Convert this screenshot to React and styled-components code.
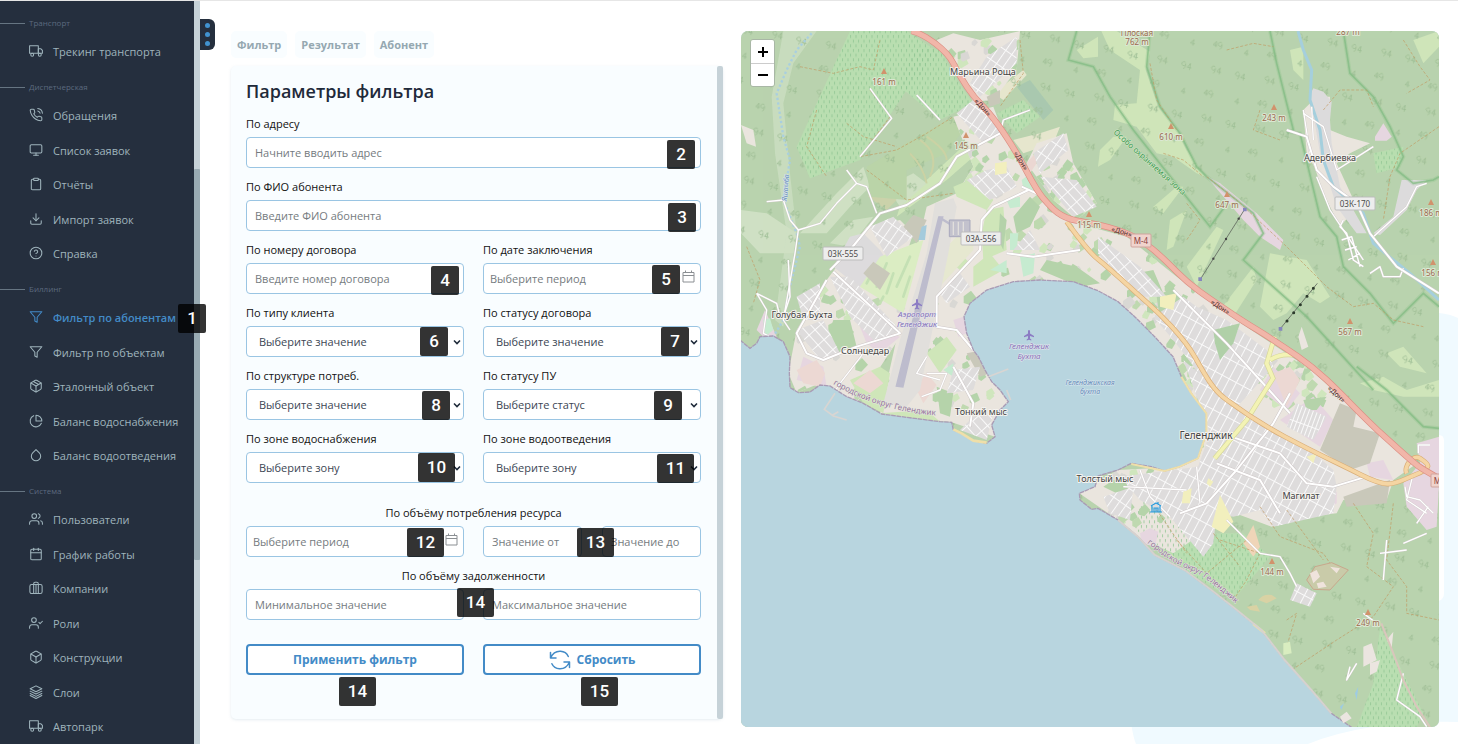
import React, { useId } from 'react';
import styled, { createGlobalStyle, css } from 'styled-components';
import {
  FiTruck, FiPhoneCall, FiMonitor, FiClipboard, FiDownload, FiHelpCircle, FiFilter,
  FiPackage, FiPieChart, FiDroplet, FiUsers, FiCalendar, FiUserCheck, FiBox,
} from 'react-icons/fi';

const c = {
  navy: '#252f3e',
  navText: '#9fb4bc',
  navMuted: '#5c6a7e',
  blue: '#438bc7',
  border: '#9ac5e3',
  panel: '#f9fdff',
  track: '#c6d2d8',
  thumb: '#99abb3',
  ink: '#1f2a3a',
};

const GlobalStyle = createGlobalStyle`
  *, *::before, *::after { box-sizing: border-box; }
  body { margin: 0; background: #fff; }
  body, button, input, select { font-family: "Open Sans", "Noto Sans", sans-serif; }
`;

const Page = styled.div`
  position: relative;
  display: flex;
  min-height: 100vh;
  overflow: hidden;
  border-top: 1px solid #e6e6e6;
`;

const Backdrop = styled.svg`
  position: absolute;
  right: 0;
  bottom: 0;
  width: 340px;
  height: 434px;
`;

/* Sidebar */
const Sidebar = styled.aside`
  position: relative;
  flex: 0 0 200px;
  display: flex;
  height: calc(100vh - 1px);
  background: ${c.navy};
`;

const Nav = styled.nav`
  flex: 1;
  min-width: 0;
  padding-top: 11px;
  overflow: hidden;
`;

const NavGroup = styled.section`
  margin-bottom: 8px;
`;

const NavHeading = styled.h2`
  display: flex;
  align-items: center;
  gap: 4px;
  margin: 0;
  height: 22px;
  font-size: 8px;
  line-height: 12px;
  font-weight: 400;
  color: ${c.navMuted};
  &::before {
    content: '';
    width: 25px;
    height: 1px;
    background: #667582;
  }
`;

const NavList = styled.ul`
  margin: 0;
  padding: 0;
  list-style: none;
  li:nth-child(even) { margin-top: 1px; }
`;

const NavLink = styled.a`
  display: flex;
  align-items: center;
  gap: 10px;
  height: 34px;
  padding-left: 29px;
  font-size: 11px;
  font-weight: ${(p) => (p.$active ? 600 : 500)};
  color: ${(p) => (p.$active ? c.blue : c.navText)};
  text-decoration: none;
  white-space: nowrap;
  svg { flex: none; width: 14px; height: 14px; stroke-width: 1.8; }
`;

const Scrollbar = styled.div`
  flex: 0 0 6px;
  align-self: stretch;
  padding-top: ${(p) => p.$offset || 0}px;
  border-radius: ${(p) => p.$radius || 0}px;
  background: ${c.track};
`;

const ScrollThumb = styled.div`
  height: 391px;
  border-radius: 1px;
  background: ${c.thumb};
`;

const MenuToggle = styled.button`
  position: absolute;
  left: 100%;
  top: 18px;
  display: flex;
  flex-direction: column;
  align-items: center;
  justify-content: center;
  gap: 4px;
  width: 15px;
  height: 31px;
  padding: 0;
  border: 0;
  border-radius: 0 6px 6px 0;
  background: ${c.navy};
`;

const Dot = styled.span`
  width: 5px;
  height: 5px;
  border-radius: 50%;
  background: #4193d0;
`;

const Callout = styled.span`
  position: absolute;
  z-index: 2;
  display: grid;
  place-items: center;
  width: ${(p) => (p.$wide ? 37 : 28)}px;
  height: 29px;
  border-radius: 2px;
  background: rgba(0, 0, 0, 0.8);
  color: #fff;
  font: 500 17px/1 Roboto, sans-serif;
  pointer-events: none;
  top: ${(p) => p.$top}px;
  ${(p) => (p.$left !== undefined ? css`left: ${p.$left}px;` : css`right: ${p.$right}px;`)}
`;

/* Content */
const Main = styled.main`
  position: relative;
  flex: 1;
  min-width: 0;
  display: grid;
  grid-template-columns: 492fr 698fr;
  gap: 18px;
  padding: 30px 19px 17px 31px;
`;

const FilterColumn = styled.div`
  display: flex;
  flex-direction: column;
  gap: 8px;
  padding-bottom: 8px;
`;

const Tabs = styled.div`
  display: flex;
  gap: 8px;
`;

const Tab = styled.button`
  height: 27px;
  padding: 0 6px;
  border: 0;
  border-radius: 5px;
  background: ${c.panel};
  color: #95a8b1;
  font-size: 11px;
  font-weight: 700;
`;

const Panel = styled.div`
  flex: 1;
  display: flex;
  border-radius: 5px;
  background: ${c.panel};
  box-shadow: 0 1px 3px rgba(150, 180, 200, 0.25);
`;

const FilterForm = styled.form`
  flex: 1;
  min-width: 0;
  padding: 13px 16px 44px 15px;
`;

const Title = styled.h1`
  margin: 0 0 13px;
  font-size: 18px;
  line-height: 24px;
  font-weight: 600;
  color: ${c.ink};
`;

const Fields = styled.div`
  display: grid;
  grid-template-columns: 1fr 1fr;
  gap: 11px 19px;
`;

const FieldBox = styled.div`
  display: flex;
  flex-direction: column;
  gap: 5px;
  ${(p) => p.$wide && css`grid-column: 1 / -1;`}
`;

const labelText = css`
  font-size: 11px;
  line-height: 16px;
  font-weight: 500;
  color: #111;
`;

const Label = styled.label`
  ${labelText}
`;

const Control = styled.div`
  position: relative;
`;

const fieldLook = css`
  display: block;
  width: 100%;
  height: 31px;
  border: 1px solid ${c.border};
  border-radius: 4px;
  background: #fff;
  font-size: 11px;
  color: #3c4654;
`;

const Input = styled.input`
  ${fieldLook}
  padding: 0 ${(p) => (p.$date ? 6 : 8)}px;
  &::placeholder { color: #757b80; opacity: 1; }
`;

const Select = styled.select`
  ${fieldLook}
  appearance: none;
  padding: 0 12px;
`;

const FieldIcon = styled.svg`
  position: absolute;
  right: ${(p) => p.$right}px;
  top: ${(p) => p.$top}px;
  width: ${(p) => p.$size}px;
  height: ${(p) => p.$size}px;
  fill: none;
  pointer-events: none;
`;

const RangeGroup = styled.fieldset`
  margin: ${(p) => p.$top}px 0 0;
  padding: 0;
  border: 0;
  min-width: 0;
`;

const RangeLegend = styled.legend`
  ${labelText}
  width: 100%;
  padding: 0 0 5px;
  text-align: center;
`;

const Pair = styled.div`
  display: grid;
  grid-template-columns: 1fr 1fr;
  gap: ${(p) => p.$gap}px;
`;

const Actions = styled(Pair)`
  margin-top: 24px;
`;

const ActionButton = styled.button`
  display: flex;
  align-items: center;
  justify-content: center;
  gap: 6px;
  width: 100%;
  height: 31px;
  padding: 0;
  border: 2px solid ${c.blue};
  border-radius: 4px;
  background: #fff;
  color: ${c.blue};
  font-size: 12px;
  font-weight: 700;
  svg { width: 22px; height: 22px; }
`;

/* Map */
const MapCard = styled.section`
  position: relative;
  min-height: 696px;
  border-radius: 7px;
  overflow: hidden;
  background: #b8d5df;
`;

const MapCanvas = styled.svg`
  position: absolute;
  inset: 0;
  width: 100%;
  height: 100%;
  text { font-family: "Noto Sans", sans-serif; paint-order: stroke; stroke-linejoin: round; }
`;

const Zoom = styled.div`
  position: absolute;
  left: 9px;
  top: 8px;
  display: flex;
  flex-direction: column;
  width: 25px;
  border: 1px solid #a9b7a6;
  border-radius: 3px;
  overflow: hidden;
`;

const ZoomButton = styled.button`
  height: 23px;
  padding: 0;
  border: 0;
  background: #fff;
  color: #000;
  & + & { border-top: 1px solid #ccc; }
  svg { display: block; margin: auto; }
`;

const BriefcaseIcon = () => (
  <svg viewBox="0 0 24 24" fill="none" stroke="currentColor" strokeLinecap="round" strokeLinejoin="round">
    <rect x="1.5" y="6" width="21" height="15.5" rx="3" />
    <path d="M8 21.5V5c0-2 1-3 2.500-3h3C15 2 16 3 16 5v16.500M12 6v15.500" />
  </svg>
);

const LayersIcon = () => (
  <svg viewBox="0 0 24 24" fill="none" stroke="currentColor" strokeLinecap="round" strokeLinejoin="round">
    <path d="M12 1.500 2 6.500l10 5 10-5zM2 10.500l10 5 10-5M2 14.500l10 5 10-5M2 18l10 5 10-5" />
  </svg>
);

const RefreshIcon = () => (
  <svg viewBox="0 0 22 22" fill="none" stroke="currentColor" strokeWidth="1.5" strokeLinecap="round" strokeLinejoin="round">
    <path d="M1.500 3.500v5.500H7M1.500 9C4 3.500 8 2 11.500 2.200c3.500.2 6.500 2.300 7.800 5.300" />
    <path d="M20.500 18.500V13H15M20.500 13C18 18.500 14 20 10.500 19.800c-3.500-.2-6.300-2.300-7.600-5.100" />
  </svg>
);

const Chevron = () => (
  <FieldIcon viewBox="0 0 10 10" $size={10} $right={2} $top={11}>
    <path d="M2 3.500 5 6.500 8 3.500" stroke="#1f2a3a" strokeWidth="1.6" />
  </FieldIcon>
);

const CalendarMark = () => (
  <FieldIcon viewBox="0 0 13 13" $size={13} $right={6} $top={7}>
    <path d="M1 2.500h11v9.500H1zM1 5.500h11M3.500.5v2M9.500.5v2" stroke="#8b8f93" />
  </FieldIcon>
);

function Field({ label, wide, kind = 'text', text, mark }) {
  const id = useId();
  return (
    <FieldBox $wide={wide}>
      <Label htmlFor={id}>{label}</Label>
      <Control>
        {kind === 'select' ? (
          <>
            <Select id={id} defaultValue={text}><option>{text}</option></Select>
            <Chevron />
          </>
        ) : (
          <Input id={id} placeholder={text} $date={kind === 'date'} />
        )}
        {kind === 'date' && <CalendarMark />}
        <Callout $right={mark[1]} $top={mark[2]} $wide={mark[0] > 9}>{mark[0]}</Callout>
      </Control>
    </FieldBox>
  );
}

const groups = [
  { title: 'Транспорт', items: [['Трекинг транспорта', FiTruck]] },
  {
    title: 'Диспетчерская',
    items: [
      ['Обращения', FiPhoneCall], ['Список заявок', FiMonitor], ['Отчёты', FiClipboard],
      ['Импорт заявок', FiDownload], ['Справка', FiHelpCircle],
    ],
  },
  {
    title: 'Биллинг',
    items: [
      ['Фильтр по абонентам', FiFilter, true], ['Фильтр по объектам', FiFilter],
      ['Эталонный объект', FiPackage], ['Баланс водоснабжения', FiPieChart],
      ['Баланс водоотведения', FiDroplet],
    ],
  },
  {
    title: 'Система',
    items: [
      ['Пользователи', FiUsers], ['График работы', FiCalendar], ['Компании', BriefcaseIcon],
      ['Роли', FiUserCheck], ['Конструкции', FiBox], ['Слои', LayersIcon], ['Автопарк', FiTruck],
    ],
  },
];

const fields = [
  { label: 'По адресу', wide: true, text: 'Начните вводить адрес', mark: [2, 6, 3] },
  { label: 'По ФИО абонента', wide: true, text: 'Введите ФИО абонента', mark: [3, 5, 3] },
  { label: 'По номеру договора', text: 'Введите номер договора', mark: [4, 5, 3] },
  { label: 'По дате заключения', kind: 'date', text: 'Выберите период', mark: [5, 21, 2] },
  { label: 'По типу клиента', kind: 'select', text: 'Выберите значение', mark: [6, 16, 1] },
  { label: 'По статусу договора', kind: 'select', text: 'Выберите значение', mark: [7, 12, 1] },
  { label: 'По структуре потреб.', kind: 'select', text: 'Выберите значение', mark: [8, 14, 2] },
  { label: 'По статусу ПУ', kind: 'select', text: 'Выберите статус', mark: [9, 19, 2] },
  { label: 'По зоне водоснабжения', kind: 'select', text: 'Выберите зону', mark: [10, 9, 1] },
  { label: 'По зоне водоотведения', kind: 'select', text: 'Выберите зону', mark: [11, 7, 2] },
];

/* Map geometry is kept in a grid of three units per pixel. */
const sea = 'M0 960L30 985 50 970 60 950 100 948 130 965 150 1010 148 1060 150 1103 175 1118 210 1116 240 1095 270 1098 320 1130 370 1150 425 1182 500 1192 600 1205 635 1207 640 1230 665 1240 700 1262 740 1270 765 1250 755 1215 780 1170 805 1145 780 1110 755 1085 735 1050 715 1010 700 990 680 940 672 890 690 850 740 810 820 785 900 780 1000 785 1074 812 1134 845 1184 890 1244 950 1299 1010 1324 1070 1354 1120 1399 1180 1399 1240 1374 1315 1319 1340 1274 1353 1234 1340 1174 1330 1134 1350 1074 1368 1065 1400 1018 1420 1020 1440 1055 1468 1074 1465 1134 1500 1194 1550 1244 1605 1334 1650 1414 1710 1484 1765 1564 1830 1634 1920 1714 2010 1774 2080 1839 2125 0 2130Z';

const highway = 'M515 33C560 45 620 90 640 130S690 220 725 255 800 350 830 400 880 500 910 535 960 592 1010 602 1100 615 1160 640 1260 705 1310 755 1400 830 1474 880 1574 940 1674 1010 1834 1160 1934 1250 2024 1335 2097 1375';
const coastRoad = 'M980 605C1020 660 1050 700 1074 718S1190 820 1224 850 1330 950 1364 1010 1420 1110 1454 1135 1540 1200 1634 1250 1774 1320 1864 1365 1960 1390 2024 1365 2060 1330 2040 1315 1990 1340 2000 1360';

const urban = [
  'M650 520L560 560 500 820 420 1180 500 1192 635 1207 765 1250 805 1145 735 1050 672 890 740 810 1074 812 1324 1070 1399 1240 1319 1340 1134 1350 1018 1420 1134 1500 1194 1550 1300 1600 1400 1530 1385 1490 1500 1485 1595 1520 1700 1490 1790 1480 1810 1440 1940 1440 1960 1380 2024 1335 1834 1160 1714 1050 1474 890 1310 770 1160 650 1010 610 900 530 850 440 790 340 760 260 640 290 700 440Z',
  'M590 60L640 40 720 60 840 33 830 150 760 240 700 245 650 150Z',
  'M890 370L980 340 1000 430 1070 550 1010 600 940 540 860 430Z',
  'M170 930L260 780 380 620 480 600 520 640 500 700 480 950 330 1180 240 1090 170 1118 145 1060Z',
  'M3 315L40 330 48 380 20 370Z',
  'M1690 270L1730 230 1770 230 1770 330 1820 350 1890 370 1830 400 1790 430 1850 560 1800 620 1750 520 1710 400Z',
  'M1690 270L1720 270 1740 470 1700 400Z',
];

const built = [
  ['M650 280L700 240 790 340 730 370Z', 'a'],
  ['M740 110L830 50 830 130 720 230 690 190Z', 'a'],
  ['M880 400L970 340 985 390 900 460Z', 'a'],
  ['M900 470L1010 480 1070 560 1000 590Z', 'b'],
  ['M680 480L740 450 800 440 830 500 750 540Z', 'b'],
  ['M270 770L330 770 480 930 410 970 330 890Z', 'a'],
  ['M390 620L460 590 520 650 440 710Z', 'a'],
  ['M170 930L250 900 300 1000 240 1020Z', 'b'],
  ['M170 830L240 790 240 900 190 900Z', 'b'],
  ['M600 820L660 760 690 800 620 850Z', 'a'],
  ['M820 690L870 630 900 690Z', 'b'],
  ['M1074 650L1200 740 1280 830 1200 830 1074 700Z', 'b'],
  ['M1240 890L1330 830 1370 860 1460 900 1580 990 1600 1040 1474 1180 1400 1090 1300 960Z', 'c'],
  ['M1330 1020L1480 1150 1560 1210 1700 1280 1780 1350 1790 1400 1780 1480 1600 1520 1560 1470 1480 1490 1430 1480 1420 1570 1390 1610 1290 1490 1200 1440 1140 1370 1374 1340 1410 1240Z', 'c'],
  ['M1670 1150L1760 1190 1720 1260 1640 1220Z', 'd'],
  ['M1670 1690L1730 1720 1710 1760 1650 1740Z', 'c'],
  ['M1090 1430L1180 1400 1170 1500 1110 1480Z', 'a'],
  ['M640 1050L720 1040 700 1110 620 1120Z', 'a'],
  ['M700 1190L760 1180 740 1260 660 1230Z', 'b'],
];

const grass = [
  'M470 590L620 480 700 410 740 380 700 350 560 480 480 560Z',
  'M1084 33L1130 33 1230 95 1218 150 1255 260 1310 330 1340 390 1395 470 1370 460 1300 410 1250 400 1190 320 1120 300 1125 255 1190 250 1200 150 1110 90Z',
  'M1080 390L1120 350 1160 350 1110 420 1074 440Z',
  'M1240 560L1310 500 1330 500 1270 580Z',
  'M1290 600L1340 570 1300 680 1280 690Z',
  'M1340 740L1430 620 1450 630 1370 800Z',
  'M1440 870L1540 740 1550 780 1480 890Z',
  'M1590 700L1700 720 1770 830 1740 850 1690 820 1640 880 1600 900 1560 860Z',
  'M1860 1090L1930 1070 2000 1110 2097 1080 2097 1130 1990 1130 1900 1110Z',
  'M1940 1000L1990 980 2060 1060 1980 1040Z',
  'M2020 60L2097 33 2097 80 2050 130Z',
  'M1650 90L1690 80 1690 180 1660 150Z',
  'M360 800L420 710 550 660 490 880Z',
  'M1010 90L1074 50 1074 110 1030 115Z',
];

const urbanGrass = [
  'M640 500L700 475 760 540 740 570 650 530Z',
  'M740 570L790 560 800 690 730 720 725 640Z',
  'M610 710L640 680 690 730 660 750Z',
  'M700 740L750 700 790 750 700 800Z',
  'M330 1080L420 1040 450 1060 430 1180 370 1150Z',
  'M420 1180L560 1170 600 1205 500 1192Z',
  'M560 1000L620 950 650 990 600 1060Z',
];

const treesDark = [
  'M500 450L620 400 690 300 640 290 480 380 380 440 390 530 500 540Z',
  'M860 540L960 520 940 620 870 620Z',
];

const orchards = [
  'M330 33L500 33 600 100 500 210 360 420 210 475 170 380Z',
  'M520 80L600 90 650 180 700 250 600 300 480 200Z',
  'M1230 1400L1310 1490 1390 1600 1430 1540 1510 1540 1590 1610 1480 1740 1350 1660 1200 1540 1170 1510Z',
  'M770 280L850 240 900 290 830 340Z',
  'M1900 400L1990 380 1980 440 1910 460Z',
  'M1920 1820L1990 1960 2050 2080 2030 2122 1850 2122 1900 1990Z',
];

const pinks = [
  'M360 920L420 930 480 950 420 1000 380 970Z',
  'M50 930L75 870 110 950 70 950Z',
  'M170 1080L260 1100 250 1040 190 1010Z',
  'M1600 1040L1680 1120 1640 1170 1560 1110Z',
  'M1620 1200L1720 1130 1780 1200 1740 1280Z',
  'M1880 1330L1930 1320 1960 1380 1890 1370Z',
  'M2030 1270L2097 1250 2097 1400 2090 1520 2060 1530 2000 1460 1990 1390 2040 1330Z',
  'M1200 1540L1230 1525 1255 1535 1245 1580 1205 1570Z',
  'M1395 465L1440 490 1550 580 1630 660 1620 690 1560 650 1510 600Z',
  'M1905 350L1930 310 1955 350 1940 362 1905 362Z',
  'M1770 1430L1790 1415 1790 1450 1775 1460Z',
  'M640 900L670 890 680 940 655 950Z',
];

const browns = [
  'M490 620L520 585 560 600 530 670Z',
  'M370 760L400 725 450 760 420 810Z',
  'M1800 1150L1850 1170 1840 1220 1920 1240 1890 1330 1830 1350 1740 1290Z',
  'M1810 1430L1950 1380 1940 1450 1820 1460Z',
  'M680 1000L730 990 750 1060 720 1070Z',
  'M740 230L780 210 780 250 750 260Z',
  'M1520 1340L1550 1325 1540 1370 1515 1360Z',
];

const borders = [
  'M1010 33L985 120 1060 140 1110 230 1180 330 1410 620 1454 560',
  'M1230 33L1220 140 1260 260 1320 340 1370 440 1400 470 1540 580 1570 640 1510 720 1700 890 1900 1110',
  'M1590 33L1610 130 1660 330 1640 335 1680 340 1740 590 1790 650 1810 740 1890 820 1960 910 2050 820 2097 860',
  'M1810 33L1830 160 1900 230 1950 320 1990 410 1970 450 2020 490 2080 480 2097 470',
  'M1850 1040L1940 1110 2050 1220 2097 1225',
];

const tracks = [
  'M180 140L280 160 360 140 400 150 420 60', 'M390 210L450 290 360 410 470 390 560 340 640 290',
  'M320 310L370 350 470 380', 'M380 450L500 540 640 520', 'M1400 470L1490 540 1640 680 1760 800 1840 860 1900 850 1960 900 2050 920',
  'M1560 270L1540 330 1620 360', 'M1750 270L1800 210 1880 210 1900 260', 'M2097 320L1980 400 1950 470 1930 600',
  'M1560 1460L1620 1550 1750 1600 1770 1630', 'M1640 1470L1750 1620', 'M1440 1560L1560 1600 1520 1680 1480 1740',
  'M1840 1450L1900 1540 1880 1640 1960 1700 1900 1790 1790 1860 1640 1960', 'M1960 1450L1940 1620 2000 1700 2000 1780 2097 1800',
  'M1640 1800L1670 1780 1640 1880', 'M230 270L200 380 260 470', 'M1230 130L1250 240 1310 330', 'M1990 60L2040 140 2070 180 2000 220',
  'M1340 550L1380 600 1340 660', 'M20 680L60 780 40 850', 'M1270 400L1330 420 1390 470', 'M1460 90L1540 70 1600 80',
  'M1310 1560L1400 1660 1520 1560', 'M1420 1540L1500 1640', 'M840 60L850 160 780 260', 'M1250 1470L1340 1600',
];

const mainRoads = [
  'M270 750L330 690 420 580 500 555 600 490 650 410 780 340',
  'M865 510L760 560 725 600 720 690 590 830 590 920 650 930 700 990',
  'M1640 330L1700 350 1730 450 1780 500 1850 550 1890 640 1970 740 2097 820',
  'M1474 1250L1620 1300 1700 1390 1780 1400 1880 1370', 'M1430 1330L1560 1380 1620 1480', 'M1320 1480L1400 1450 1490 1350 1600 1210 1650 1120',
  'M1300 810L1460 970 1560 1080 1650 1180', 'M640 1040L700 1150 690 1220',
  'M260 780L170 940 200 1000 250 1020 350 980 480 940 280 755', 'M845 500L900 525M800 700L880 710 1020 690',
];

const minorRoads = [
  'M80 545L130 540 150 600 175 630 240 610 290 550 350 490 320 450M350 490L380 500 410 580',
  'M175 630L165 700 130 900 150 930', 'M390 205L455 295 360 410', 'M530 225L600 300', 'M870 270L790 300 780 340',
  'M145 720L150 830 130 890', 'M1690 280L1750 320 1790 450 1900 380', 'M1690 270L1710 400M1715 260L1720 360',
  'M1900 650L2000 560 2030 500 2060 490', 'M1730 470L1770 570 1870 720',
  'M1810 600L1800 620 1820 640 1840 720 1870 740M1805 660L1835 650 1860 740M1815 690L1850 680M1825 720L1860 700',
  'M1890 760L1920 740 1930 770 1980 770 1990 745', 'M1370 1340L1380 1450', 'M1460 1500L1560 1600 1620 1610 1650 1660 1670 1700',
  'M1200 1350L1230 1430 1290 1490M1150 1400L1340 1410', 'M545 1130L600 1110 620 1060 560 1060M250 1170L300 1090 370 1000',
  'M2020 1360L2000 1440 2060 1480M1930 1680L1940 1560', 'M2035 1300V1275H2070M1995 1400L2000 1430 2040 1440 2080 1480M2065 1460L2030 1510',
  'M1990 1960L1970 2040 2040 2090 2060 2120', 'M1870 1780L1910 1810', 'M50 820L80 870 70 940 90 950M50 820L110 850 120 890',
  'M560 1010L530 1060 600 1080', 'M1830 1940L1820 1980 1850 1930', 'M1990 1570L2060 1540M1920 1600L2000 1590',
];

/* Gardens and yards scattered through the built-up area, from a fixed seed. */
const gardens = (() => {
  let seed = 11;
  const next = () => {
    seed = (seed * 16807) % 2147483647;
    return seed / 2147483647;
  };
  const spots = [
    [560, 820, 180, 380], [780, 560, 280, 240], [1060, 640, 240, 260], [1200, 760, 220, 300],
    [1290, 900, 120, 380], [1540, 1010, 200, 160], [1080, 1350, 260, 160], [170, 780, 300, 380],
    [860, 380, 200, 200], [640, 300, 200, 220], [600, 60, 230, 170],
  ];
  const shapes = [];
  spots.forEach(([x0, y0, w, h]) => {
    for (let i = 0; i < 34; i += 1) {
      const x = Math.round(x0 + next() * w);
      const y = Math.round(y0 + next() * h);
      const s = Math.round(7 + next() * 16);
      const t = Math.round(5 + next() * 14);
      shapes.push(`M${x} ${y}l${s} ${-t}l${t} ${s}l${-s} ${t + 3}l${-t} ${-5}Z`);
    }
  });
  return shapes;
})();
const gardenTints = ['#b5d4aa', '#bfd9b0', '#cfe6bd', '#b5d4aa', '#d9d8d4'];

const peaks = [
  [884, 72, '161 m'], [966, 136, '145 m'], [1089, 215, '115 m'], [1171, 127, '610 m'], [1274, 108, '243 m'],
  [1227, 195, '647 m'], [1350, 322, '567 m'], [1431, 203, '186 m'], [1433, 263, '156 m'], [1272, 562, '144 m'], [1368, 613, '249 m'],
];

const towns = [
  [983, 75, 'Марьина Роща'], [802, 318, 'Голубая Бухта'], [865, 354, 'Солнцедар'], [981, 415, 'Тонкий мыс'],
  [1105, 482, 'Толстый мыс'], [1301, 499, 'Магилат'], [1330, 161, 'Адербиевка'],
];

const shields = [[843, 254, 40, '03К-555'], [981, 239, 40, '03А-556'], [1355, 204, 40, '03К-170']];

function Plane({ x, y }) {
  return <path transform={`translate(${x} ${y})`} d="M0-5c.7 0 1 .7 1 1.500V-1.500L5 1v1.200L1 1v2.500l1.300 1V5.500L0 4.800-2.300 5.500V4.500L-1 3.500V1l-4 1.200V1l4-2.500v-2C-1-4.300-.7-5 0-5z" fill="#8c7cc4" />;
}

function GelendzhikMap() {
  return (
    <MapCanvas viewBox="741 31 698 696" preserveAspectRatio="xMidYMid slice" role="img" aria-label="Карта Геленджика">
      <defs>
        <pattern id="trees" width="164" height="148" patternUnits="userSpaceOnUse" patternTransform="rotate(11)">
          <g fill="none" stroke="#9fbe95" strokeWidth="2.5">
            <path d="M22 38q6-6 4-16m0 2a6 6 0 1 1-1-5M40 38V18l-8 13h13" />
            <path d="M104 104V86l-8 12h13M118 108q6-6 4-16m0 2a6 6 0 1 1-1-5" />
            <path d="M112 34q6-6 4-16m0 2a6 6 0 1 1-1-5M130 34V14l-8 13h13" />
            <path d="M36 112V94l-8 12h13" />
          </g>
        </pattern>
        <pattern id="vines" width="16" height="28" patternUnits="userSpaceOnUse">
          <path d="M4 3v9M12 17v9" stroke="#92c694" strokeWidth="2.5" />
        </pattern>
        {[['a', 35, 22, 48], ['b', -42, 24, 40], ['c', 28, 24, 52], ['d', 20, 12, 70]].map(([id, angle, w, h]) => (
          <pattern key={id} id={`streets-${id}`} width={w} height={h} patternUnits="userSpaceOnUse" patternTransform={`rotate(${angle})`}>
            <path d={`M0 0H${w}M0 0V${h}`} stroke="#fff" strokeWidth="6" />
          </pattern>
        ))}
        <clipPath id="town">{urban.map((d) => <path key={d} d={d} />)}</clipPath>
        <path id="shoreWest" d="M833 384Q880 412 942 416" />
        <path id="shoreSouth" d="M1147 543Q1175 565 1190 570T1245 612" />
        <path id="reserve" d="M1113 133L1188 200" />
      </defs>

      <g transform="translate(740 20) scale(0.333333)">
        <rect x="0" y="30" width="2100" height="2100" fill="#b9d3ae" />
        <g fill="#cfe5ba">{grass.map((d) => <path key={d} d={d} />)}</g>
        <g fill="#cfe0c4">
          <path d="M3 570L80 580 170 640 160 700 60 700 3 640ZM270 670L340 600 400 590 330 680ZM440 500L520 460 560 490 480 560ZM290 520L370 440 390 500 330 560 260 640 180 640Z" />
          <path d="M130 33L230 33 160 130 130 250 150 460 170 640 130 920 105 900 140 640 105 400 95 230Z" opacity=".7" />
        </g>
        <path d="M385 530L400 470 470 540 440 570ZM1520 1740" fill="#cbd3ab" />
        <path d="M900 340L960 320 940 370 850 400 820 360ZM760 220L850 150 860 165 790 240Z" fill="#e6e6ce" />
        <path d="M830 200L870 180 940 270 910 300Z" fill="#a9c9b0" />
        <g fill="#bbd4a8">{treesDark.map((d) => <path key={d} d={d} />)}</g>
        <rect x="0" y="30" width="2100" height="2100" fill="url(#trees)" />
        <g fill="#b9deb1">{orchards.map((d) => <path key={d} d={d} />)}</g>
        <g fill="#eae5de">{urban.map((d) => <path key={d} d={d} />)}</g>
        <g fill="url(#vines)">{orchards.map((d) => <path key={d} d={d} />)}</g>
        <g clipPath="url(#town)">
          {gardens.map((d, i) => <path key={d} d={d} fill={gardenTints[i % 5]} />)}
        </g>
        <g fill="#cfe6b9">{urbanGrass.map((d) => <path key={d} d={d} />)}</g>
        <path d="M280 740L330 650 370 640 420 690 440 720 360 800 330 780ZM1710 225L1720 205 1750 215 1775 245 1770 300 1775 370 1800 500 1880 640 1850 640 1790 560 1740 400ZM1985 480L2060 480 2030 510 2000 570 1920 645 1900 640 1960 590Z" fill="#dddbdd" />
        <path d="M360 800L420 710 550 660 490 880Z" fill="#dbedc3" />
        <path d="M380 790l20-40M410 800l30-70M440 820l20-60M470 800l40-90M490 830l20-60M420 850l10-20" stroke="#c4e0b4" strokeWidth="8" strokeLinecap="round" />
        <path d="M585 815L600 700 650 650 700 650 700 690Z" fill="#e6e8d0" />
        <g fill="#e6d6e0">{pinks.map((d) => <path key={d} d={d} />)}</g>
        <path d="M525 1100L560 1060 590 1095 550 1150ZM1600 1060L1650 1040 1680 1080 1640 1160ZM340 1090L390 1050 430 1090 390 1120ZM170 1050L230 1020 255 1060 240 1100 190 1090ZM860 430L885 400 890 430 870 460Z" fill="#ecd8d3" />
        <path d="M1490 1580L1520 1525 1540 1590 1520 1620Z" fill="#efd5b8" transform="translate(20 -10)" />
        <g fill="#c9c8ba">{browns.map((d) => <path key={d} d={d} />)}</g>
        <g fill="#b5d3aa">
          <path d="M780 580L800 600 790 690 775 660ZM830 640L870 620 900 560 870 530 820 590ZM920 720L1010 740 1080 790 1020 800 900 750ZM990 500L1030 540 990 560ZM280 900L330 900 350 980 300 1000 260 960ZM590 1100L640 1120 630 1190 600 1180ZM1250 830L1300 800 1330 850 1260 900ZM1190 760L1240 750 1270 820 1210 810ZM1690 1140L1760 1130 1730 1170 1700 1170ZM1120 1380L1200 1390 1130 1420 1090 1400Z" />
        </g>
        <g fill="#c6ebd0"><path d="M840 710L885 700 880 760 850 770ZM845 480L865 465 890 520 850 505ZM800 540L840 530 840 560 810 565ZM750 750L800 720 800 760ZM810 640L835 640 830 690 810 690ZM610 1050L640 1030 640 1070ZM70 900L90 895 100 930 75 950Z" /></g>
        <g fill="#dedcdc">{built.map(([d]) => <path key={d} d={d} />)}</g>
        {built.map(([d, grid]) => <path key={d} d={d} fill={`url(#streets-${grid})`} opacity=".85" />)}
        <g fill="#f2efbd"><path d="M765 430L800 425 800 460 765 465ZM1260 830L1310 820 1300 870 1260 860ZM1440 1425L1480 1505 1450 1540 1415 1520ZM1330 1415L1355 1405 1350 1450 1325 1450ZM1405 1375L1420 1385 1410 1400 1400 1390ZM1700 1310L1730 1300 1720 1330Z" /></g>
        <path d="M1420 930L1500 910 1480 970 1440 1020 1425 970Z" fill="#b0d0a8" />

        <path d="M540 360Q600 400 570 470M510 400Q550 440 560 490M560 350Q620 390 620 420" stroke="#cbd3a4" strokeWidth="6" fill="none" />
        <path d="M585 550L640 535 650 560 625 700 540 1110 500 1160 430 1150 480 960 560 700Z" fill="#e1dfdc" />
        <path d="M597 592L607 592 488 1100 470 1098Z" fill="#bdbccd" stroke="#bdbccd" strokeWidth="6" />
        <path d="M597 592L635 615" stroke="#bdbccd" strokeWidth="7" />
        <path d="M628 600H690V650H628Z" fill="#c3c2ce" stroke="#a9a9bd" strokeWidth="3" />
        <path d="M640 605v40M655 605v40M670 605v40" stroke="#e1dfdc" strokeWidth="4" />
        <path d="M545 620L560 615 555 660 535 660Z" fill="#a5cbdc" />

        <g fill="none" stroke="#84bd84" strokeWidth="5" opacity=".75">{borders.map((d) => <path key={d} d={d} />)}</g>
        <g fill="none" stroke="#84bd84" strokeWidth="12" opacity=".25">{borders.map((d) => <path key={d} d={d} />)}</g>
        <g fill="none" stroke="#c29a63" strokeWidth="2.5" strokeDasharray="9 5" opacity=".8">{tracks.map((d) => <path key={d} d={d} />)}</g>
        <path d="M215 40L170 90 140 150 110 220 130 350 150 420 130 540 170 640 180 680 150 800 130 900 100 950" fill="none" stroke="#a9cfdf" strokeWidth="7" strokeDasharray="7 7" />
        <path d="M1674 33L1690 90 1715 150 1710 240 1740 330 1750 420 1780 500 1870 580 1900 670 1960 720 2010 760 2097 840" fill="none" stroke="#a5cfdd" strokeWidth="9" />

        <g fill="none" stroke="#cfc8c8" strokeWidth="6" strokeLinejoin="round">{minorRoads.map((d) => <path key={d} d={d} />)}</g>
        <g fill="none" stroke="#fff" strokeWidth="4" strokeLinejoin="round">{minorRoads.map((d) => <path key={d} d={d} />)}</g>
        <g fill="none" stroke="#cfc8c8" strokeWidth="9" strokeLinejoin="round">{mainRoads.map((d) => <path key={d} d={d} />)}</g>
        <g fill="none" stroke="#fff" strokeWidth="6" strokeLinejoin="round">{mainRoads.map((d) => <path key={d} d={d} />)}</g>

        <path d={sea} fill="#b8d5df" stroke="#a99bb5" strokeWidth="4" strokeDasharray="14 2" />
        <path d="M285 1120L253 1168 280 1188 320 1200M278 1185L295 1175M745 1070L805 1047M800 1110L812 1140" fill="none" stroke="#d8d5d2" strokeWidth="5" />
        <path d="M1324 1070L1354 1120 1399 1180 1399 1240 1374 1315 1319 1340 1274 1353 1174 1332" fill="none" stroke="#efdfa9" strokeWidth="6" />
        <path d="M640 1228L665 1240 700 1262 740 1268M1540 1812L1575 1840" fill="none" stroke="#efdfa9" strokeWidth="8" />
        <path d="M1134 1500L1194 1550 1244 1605 1334 1650 1414 1710 1484 1765 1564 1830 1634 1920 1714 2010 1774 2080" fill="none" stroke="#d6d2cf" strokeWidth="6" />

        <path d="M1604 950L1580 1030 1599 1075 1520 1200 1424 1315M1590 1020Q1620 1000 1660 1005" fill="none" stroke="#d6d79b" strokeWidth="15" />
        <path d="M1604 950L1580 1030 1599 1075 1520 1200 1424 1315M1590 1020Q1620 1000 1660 1005" fill="none" stroke="#f3f3b4" strokeWidth="11" />
        <path d={coastRoad} fill="none" stroke="#d9ad77" strokeWidth="15" />
        <path d={coastRoad} fill="none" stroke="#f5d5a3" strokeWidth="11" />
        <path d={highway} fill="none" stroke="#dc8f84" strokeWidth="19" />
        <path d={highway} fill="none" stroke="#f1b6a9" strokeWidth="15" />

        <path d="M1514 568L1381 778M1732 790L1621 926" stroke="#6f7a6b" strokeWidth="3" />
        <path d="M1509 563h11v11h-11zM1375 772h11v11h-11zM1616 921h11v11h-11z" fill="#8586bd" />
        <path d="M1496 596h.1M1458 657h.1M1420 716h.1" stroke="#444" strokeWidth="7" strokeLinecap="round" />
        <path d="M1720 805h.1M1701 829h.1M1681 854h.1M1661 878h.1M1641 903h.1" stroke="#2c3a2c" strokeWidth="9" strokeLinecap="round" />
        <path d="M1700 1680L1725 1640 1775 1628 1825 1650 1770 1710 1720 1708Z" fill="#c9cba9" stroke="#c99f86" strokeWidth="2.5" />
        <path d="M1710 1660l20-10 10 20-20 20zM1770 1640l30 5-10 15zM1730 1690l20-5 10 15-25 5z" fill="#efe3dc" />
        <path d="M1870 1880l25-10 15 50-40 20zM1890 1930l30-10-10 35-20 10zM1940 1860l20-25-5 50zM1800 2090l20-15 15 20-25 15zM1675 950l10-30 20 60-20 10z" fill="#ebe5e0" />
        <path d="M1845 2020l10-20-5 40zM1800 2060l12-10-8 20z" fill="#9dcbe4" />
        <path d="M1924 1810L1960 1900 1990 1980 2030 2060 2070 2122" fill="none" stroke="#d9c6bc" strokeWidth="6" />
        <path d="M1555 1740q15-20 40-15l15 10-30 15zM1520 1760l30-5 10 20-30-5z" fill="#d9d2a4" />
        <path d="M1630 1870l20-5 5 35-25 5z" fill="#d9edc0" />
      </g>

      <g fill="#d1926c">
        {peaks.map(([x, y]) => <path key={x} d={`M${x} ${y - 4}l3 6h-6z`} />)}
      </g>
      <g fontSize="8" textAnchor="middle" fill="#9c6a50" stroke="#dbe8d3" strokeWidth="2">
        {peaks.map(([x, y, text]) => <text key={x} x={x} y={y + 13}>{text}</text>)}
        <text x="1137" y="36">Плоская</text>
        <text x="1137" y="45">762 m</text>
        <text x="1348" y="35">287 m</text>
      </g>
      <g fontSize="9" textAnchor="middle" fill="#444" stroke="#f5f3ef" strokeWidth="2">
        {towns.map(([x, y, text]) => <text key={text} x={x} y={y}>{text}</text>)}
        <text x="1206" y="439" fontSize="10">Геленджик</text>
      </g>
      {shields.map(([x, y, w, text]) => (
        <g key={text}>
          <rect x={x - w / 2} y={y - 7} width={w} height="13" rx="1" fill="#ededed" stroke="#bdbdbd" />
          <text x={x} y={y + 3} fontSize="8" textAnchor="middle" fill="#4a4a4a">{text}</text>
        </g>
      ))}
      <g fontSize="8" textAnchor="middle" fill="#8a4040">
        <rect x="1131" y="234" width="20" height="13" rx="1" fill="#f0d3cd" stroke="#cfa49d" />
        <text x="1141" y="244">М-4</text>
        <rect x="1431" y="474" width="20" height="13" rx="1" fill="#f0d3cd" stroke="#cfa49d" />
        <text x="1441" y="484">М-4</text>
      </g>
      <g fontSize="7" textAnchor="middle" fill="#4b2f2f">
        <text transform="translate(981 109) rotate(48)">«Дон»</text>
        <text transform="translate(1019 162) rotate(58)">«Дон»</text>
        <text transform="translate(1121 234) rotate(17)">«Дон»</text>
        <text transform="translate(1219 309) rotate(33)">«Дон»</text>
        <text transform="translate(1335 396) rotate(42)">«Дон»</text>
      </g>
      <g fontSize="8" fontStyle="italic" textAnchor="middle" fill="#8272b8" stroke="#e8e6ee" strokeWidth="1">
        <text x="917" y="317">Аэропорт</text>
        <text x="917" y="327">Геленджик</text>
        <text x="1029" y="349">Геленджик</text>
        <text x="1029" y="359">Бухта</text>
      </g>
      <Plane x={917} y={304} />
      <Plane x={1029} y={335} />
      <g fontSize="7" fontStyle="italic" textAnchor="middle" fill="#6388b8" stroke="#dbe8ef" strokeWidth="1">
        <text x="1090" y="385">Геленджикская</text>
        <text x="1090" y="394">бухта</text>
        <text transform="translate(788 188) rotate(-85)">Яшамба</text>
      </g>
      <g fontSize="8" fill="#96759c" stroke="#e4e6df" strokeWidth="1">
        <text><textPath href="#shoreWest">городской округ Геленджик</textPath></text>
        <text><textPath href="#shoreSouth">городской округ Геленджик</textPath></text>
      </g>
      <text fontSize="8" fill="#3d9a52" stroke="#d3e6c8" strokeWidth="1"><textPath href="#reserve">Особо охраняемая зона</textPath></text>
      <g fill="none" stroke="#2a9bdc" strokeWidth="1.2">
        <path d="M1151 506l5-3 5 3M1152 506v6M1160 506v6M1154 512v-4h4v4M1156 508v4M1150 512h12M1158 502v2" />
      </g>
    </MapCanvas>
  );
}

export default function App() {
  return (
    <>
      <GlobalStyle />
      <Page>
        <Backdrop viewBox="0 0 340 434" fill="#f0faff" aria-hidden="true">
          <path d="M321 3Q332 4 340 8V412Q250 410 190 434H18Q8 410 8 300H321Z" />
          <path d="M321 125q5 0 5 6v152q0 6-5 8z" fill="#fff" />
        </Backdrop>
        <Sidebar>
          <Nav>
            {groups.map((group) => (
              <NavGroup key={group.title}>
                <NavHeading>{group.title}</NavHeading>
                <NavList>
                  {group.items.map(([text, Icon, active]) => (
                    <li key={text}>
                      <NavLink href="#" $active={active}><Icon />{text}</NavLink>
                    </li>
                  ))}
                </NavList>
              </NavGroup>
            ))}
          </Nav>
          <Scrollbar $offset={168}><ScrollThumb /></Scrollbar>
          <MenuToggle aria-label="Меню"><Dot /><Dot /><Dot /></MenuToggle>
          <Callout $right={-6} $top={303}>1</Callout>
        </Sidebar>
        <Main>
          <FilterColumn>
            <Tabs>
              <Tab>Фильтр</Tab>
              <Tab>Результат</Tab>
              <Tab>Абонент</Tab>
            </Tabs>
            <Panel>
              <FilterForm>
                <Title>Параметры фильтра</Title>
                <Fields>
                  {fields.map((field) => <Field key={field.label} {...field} />)}
                </Fields>
                <RangeGroup $top={22}>
                  <RangeLegend>По объёму потребления ресурса</RangeLegend>
                  <Pair $gap={19}>
                    <Control>
                      <Input aria-label="Период" placeholder="Выберите период" $date />
                      <CalendarMark />
                      <Callout $wide $right={20} $top={2}>12</Callout>
                    </Control>
                    <Control>
                      <Pair $gap={20}>
                        <Input aria-label="Значение от" placeholder="Значение от" />
                        <Input aria-label="Значение до" placeholder="Значение до" />
                      </Pair>
                      <Callout $wide $right={87} $top={2}>13</Callout>
                    </Control>
                  </Pair>
                </RangeGroup>
                <RangeGroup $top={11}>
                  <RangeLegend>По объёму задолженности</RangeLegend>
                  <Pair $gap={19}>
                    <Control>
                      <Input aria-label="Минимальное значение" placeholder="Минимальное значение" />
                      <Callout $wide $right={-30} $top={-1}>14</Callout>
                    </Control>
                    <Input aria-label="Максимальное значение" placeholder="Максимальное значение" />
                  </Pair>
                </RangeGroup>
                <Actions $gap={19}>
                  <Control>
                    <ActionButton type="submit">Применить фильтр</ActionButton>
                    <Callout $wide $left={93} $top={33}>14</Callout>
                  </Control>
                  <Control>
                    <ActionButton type="reset"><RefreshIcon />Сбросить</ActionButton>
                    <Callout $wide $left={98} $top={33}>15</Callout>
                  </Control>
                </Actions>
              </FilterForm>
              <Scrollbar $radius={2} />
            </Panel>
          </FilterColumn>
          <MapCard>
            <GelendzhikMap />
            <Zoom>
              <ZoomButton aria-label="Приблизить">
                <svg width="10" height="10"><path d="M5 0v10M0 5h10" stroke="currentColor" strokeWidth="2" /></svg>
              </ZoomButton>
              <ZoomButton aria-label="Отдалить">
                <svg width="10" height="10"><path d="M0 5h10" stroke="currentColor" strokeWidth="2" /></svg>
              </ZoomButton>
            </Zoom>
          </MapCard>
        </Main>
      </Page>
    </>
  );
}
